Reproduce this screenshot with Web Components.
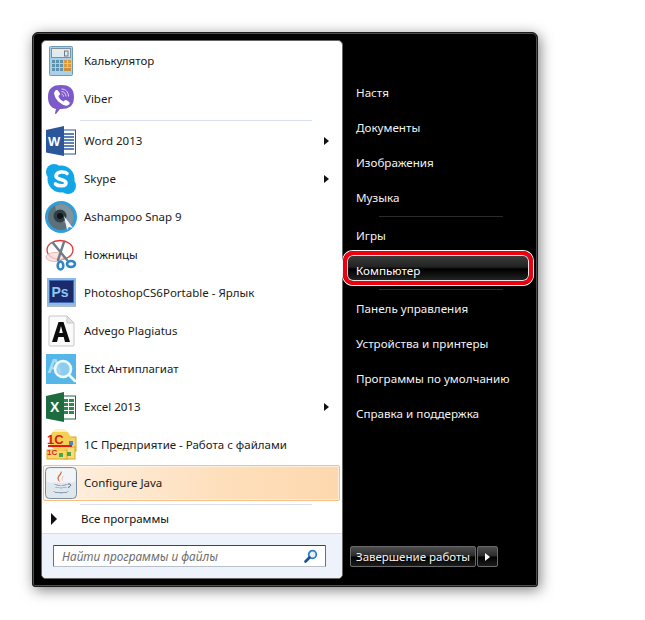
<!DOCTYPE html>
<html lang="ru"><head><meta charset="utf-8"><title>Пуск</title>
<style>html,body{margin:0;background:#fff;height:620px;overflow:hidden}body{padding:32px 0 0 32px;box-sizing:border-box;font:12px/16px "Noto Sans","Liberation Sans",sans-serif}</style>
</head><body>
<start-menu>
  <left-panel slot="left">
    <app-row icon="calc">Калькулятор</app-row>
    <app-row icon="viber">Viber</app-row>
    <panel-sep></panel-sep>
    <app-row icon="word" more>Word 2013</app-row>
    <app-row icon="skype" more>Skype</app-row>
    <app-row icon="snap">Ashampoo Snap 9</app-row>
    <app-row icon="scissors">Ножницы</app-row>
    <app-row icon="ps">PhotoshopCS6Portable - Ярлык</app-row>
    <app-row icon="advego">Advego Plagiatus</app-row>
    <app-row icon="etxt">Etxt Антиплагиат</app-row>
    <app-row icon="excel" more>Excel 2013</app-row>
    <app-row icon="onec">1С Предприятие - Работа с файлами</app-row>
    <app-row icon="java" active>Configure Java</app-row>
    <panel-sep></panel-sep>
    <all-programs>Все программы</all-programs>
    <search-box slot="search" placeholder="Найти программы и файлы"></search-box>
  </left-panel>
  <right-panel slot="right">
    <place-link>Настя</place-link>
    <place-link>Документы</place-link>
    <place-link>Изображения</place-link>
    <place-link>Музыка</place-link>
    <place-sep></place-sep>
    <place-link>Игры</place-link>
    <place-link marked>Компьютер</place-link>
    <place-sep></place-sep>
    <place-link>Панель управления</place-link>
    <place-link>Устройства и принтеры</place-link>
    <place-link>Программы по умолчанию</place-link>
    <place-link>Справка и поддержка</place-link>
    <shut-down slot="foot">Завершение работы</shut-down>
  </right-panel>
</start-menu>
<script>
const ICONS={
calc:`<svg viewBox="0 0 32 32" width="32" height="32"><rect x="4.500" y="1.500" width="23" height="29" rx="1" fill="#a9d0e6" stroke="#6d9cb8"/><rect x="6.500" y="3.500" width="19" height="9" fill="#dfeaf4" stroke="#7a8fa8"/><rect x="7" y="4" width="18" height="3" fill="#f4ecc8" opacity=".8"/><rect x="19.500" y="6" width="3.500" height="5" fill="none" stroke="#6c7a88"/><g fill="#5f92ac"><rect x="7" y="15" width="3" height="3"/><rect x="11" y="15" width="3" height="3"/><rect x="15" y="15" width="3" height="3"/><rect x="7" y="19" width="3" height="3"/><rect x="11" y="19" width="3" height="3"/><rect x="15" y="19" width="3" height="3"/><rect x="7" y="23" width="3" height="3"/><rect x="11" y="23" width="3" height="3"/><rect x="15" y="23" width="3" height="3"/></g><g fill="#d99a3d"><rect x="19" y="15" width="3" height="3"/><rect x="23" y="15" width="3" height="3"/><rect x="19" y="19" width="3" height="3"/><rect x="23" y="19" width="3" height="3"/></g><rect x="19" y="23" width="7" height="3" fill="#c98f3c"/></svg>`,
viber:`<svg viewBox="0 0 32 32" width="32" height="32"><path d="M11 26C6 25 3 21 3 14 3 5 8 2 16 2s13 3 13 12-5 12-13 12h-1l-4 5c-.5 0-1-.5-1-1z" fill="#7d59c9"/><path d="M10.500 7.500c1-.8 2.200-.6 2.800.4l1.400 2.200c.5.8.3 1.600-.4 2.200l-1 .8c.8 2.500 2.800 4.500 5.300 5.400l.9-1c.6-.7 1.500-.8 2.200-.3l2.200 1.500c1 .7 1 2 .2 2.800-1 1-2.300 1.500-3.900 1-6-2-10-6.500-11-11.500-.3-1.400.5-2.500 1.300-3.500z" fill="#fff"/><g fill="none" stroke="#e4dcf5" stroke-width="1"><path d="M16.500 6c4 0 7 3 7 7.500"/><path d="M16.500 8.500c2.500 0 4.500 2 4.500 5"/><path d="M16.500 11c1 0 2 1 2 2.500"/></g></svg>`,
word:`<svg viewBox="0 0 32 32" width="32" height="32"><rect x="15" y="5" width="15.500" height="24" fill="#fff" stroke="#2b579a"/><g stroke="#2b579a" stroke-width="1.400"><path d="M17 9h12M17 12h12M17 15h12M17 18h12M17 21h12M17 24h12"/></g><path d="M1 5 19 1v30L1 27.500z" fill="#2b579a"/><text x="3" y="21" font-family="Liberation Sans" font-weight="700" font-size="13" fill="#fff">W</text></svg>`,
skype:`<svg viewBox="0 0 32 32" width="32" height="32"><circle cx="9" cy="9" r="8" fill="#12a5e8"/><circle cx="23" cy="23" r="8" fill="#12a5e8"/><circle cx="16" cy="16" r="13.500" fill="#12a5e8"/><path d="M22 10.500C20 8.500 12 8 11 12.500c-.8 5 10 3 10 7.500 0 3.500-7.500 3.500-10.500 1" fill="none" stroke="#fff" stroke-width="3.600" stroke-linecap="round"/></svg>`,
snap:`<svg viewBox="0 0 32 32" width="32" height="32"><circle cx="16" cy="16" r="16" fill="#2f9edb"/><circle cx="16" cy="16" r="13" fill="#5c7079"/><path d="M16 3a13 13 0 0 1 10 21c-7-1-14-6-16-19 2-1 4-2 6-2z" fill="#7f939c"/><circle cx="15" cy="15" r="6.500" fill="#2f3d45"/><circle cx="15" cy="15" r="3" fill="#0e1519"/><path d="M19 15l9 12-4-1-2 3z" fill="#eef2f5"/></svg>`,
scissors:`<svg viewBox="0 0 32 32" width="32" height="32"><ellipse cx="15" cy="11" rx="13" ry="9.500" fill="#fff" stroke="#de3a3a" stroke-width="1.400"/><ellipse cx="10" cy="18" rx="9" ry="4.500" fill="#f7dcdc" stroke="#e8a8a8" opacity=".8"/><path d="M8 4l14 17M19 3 13 21" stroke="#707c88" stroke-width="2.400" stroke-linecap="round"/><g fill="none" stroke="#2f86c1" stroke-width="2.600"><ellipse cx="15.500" cy="26.500" rx="2.800" ry="4"/><ellipse cx="26" cy="25" rx="4" ry="3"/></g></svg>`,
ps:`<svg viewBox="0 0 32 32" width="32" height="32"><rect x="2" y="1" width="29" height="27" fill="#8db9e6"/><rect x="2" y="28" width="29" height="2" fill="#b0b8c0"/><rect x="4.500" y="3.500" width="24" height="22" fill="#1b2a6b" stroke="#3f68b5"/><text x="6.500" y="20" font-family="Liberation Sans" font-weight="700" font-size="14" fill="#8fc6f5">Ps</text></svg>`,
advego:`<svg viewBox="0 0 32 32" width="32" height="32"><path d="M5 1h17l7 7v22a1 1 0 0 1-1 1H5a1 1 0 0 1-1-1V2a1 1 0 0 1 1-1z" fill="#fafafa" stroke="#c7c7c7"/><path d="M22 1v7h7z" fill="#e3e3e3" stroke="#c7c7c7"/><path d="M7 27 13.500 7h5L25 27h-5l-1.300-5h-5.400L12 27zM14.200 18h3.600L16 11z" fill="#0c0c0c"/></svg>`,
etxt:`<svg viewBox="0 0 32 32" width="32" height="32"><rect x="1" y="1" width="30" height="30" fill="#55b6ea"/><text x="2" y="20" font-family="Liberation Sans" font-weight="700" font-size="21" fill="#a8dcf6">A</text><circle cx="18" cy="16" r="8" fill="#9fd6f2" fill-opacity=".75" stroke="#f4fbfe" stroke-width="2.600"/><path d="M24 22l6 6" stroke="#f4fbfe" stroke-width="2.600" stroke-linecap="round"/></svg>`,
excel:`<svg viewBox="0 0 32 32" width="32" height="32"><rect x="15" y="5" width="15.500" height="23" fill="#fff" stroke="#1d6b3f"/><g fill="#2a8a52"><rect x="19" y="8" width="4" height="3"/><rect x="24" y="8" width="5" height="3"/><rect x="19" y="12" width="4" height="3"/><rect x="24" y="12" width="5" height="3"/><rect x="19" y="16" width="4" height="3"/><rect x="24" y="16" width="5" height="3"/><rect x="19" y="20" width="4" height="3"/><rect x="24" y="20" width="5" height="3"/></g><path d="M1 5 19 1v30L1 27.500z" fill="#1d6b3f"/><text x="5" y="21" font-family="Liberation Sans" font-weight="700" font-size="14" fill="#fff">X</text></svg>`,
onec:`<svg viewBox="0 0 32 32" width="32" height="32"><rect x="22" y="8" width="9" height="14" fill="#f6d365" stroke="#d9a520"/><rect x="19" y="18" width="11" height="12" fill="#f8dc78" stroke="#d9a520"/><rect x="2" y="21" width="20" height="9" fill="#f6d96e" stroke="#d9a520"/><circle cx="15" cy="11" r="11" fill="#f6cf55"/><path d="M7 3a11 11 0 0 1 16 0z" fill="#fdf0b8"/><text x="2" y="15" font-family="Liberation Sans" font-weight="700" font-size="13" fill="#e01a16">1С</text><path d="M3 17h24" stroke="#e01a16" stroke-width="2"/><text x="2" y="26" font-family="Liberation Sans" font-weight="700" font-size="8" fill="#e01a16">1С</text><rect x="14" y="24" width="4" height="4" fill="#4da24a"/><rect x="24" y="12" width="4" height="4" fill="#4a87c9"/><rect x="22" y="23" width="4" height="4" fill="#4da24a"/></svg>`,
java:`<svg viewBox="0 0 32 32" width="32" height="32"><rect x=".5" y=".5" width="31" height="31" rx="4" fill="#dfe7ee" stroke="#7c8d9c"/><rect x="1.500" y="1.500" width="29" height="14" rx="3" fill="#fff" opacity=".6"/><path d="M16 4c3 3-4 5-2 9 .5 1 1 1.500 1.500 2-3-1-4-4-2-6.500C14.500 7 16 6 16 4zM20 8c-2 1.500-4 3-2 6.500C16 12 16.500 10 20 8z" fill="#d8602a"/><path d="M9 17c3 1.500 11 1.500 14 0-1 2-13 2-14 0zM10 20c3 1 9 1 12 0-1 1.500-11 1.500-12 0zM8 24c4 2 12 2 16 0-2 3-14 3-16 0z" fill="#41647e"/><path d="M23 17c3-.5 4 2 0 3.500" fill="none" stroke="#41647e"/></svg>`
};
const tpl=(el,html)=>{el.attachShadow({mode:'open'}).innerHTML=html};
customElements.define('start-menu',class extends HTMLElement{constructor(){super();tpl(this,`<style>
:host{display:flex;box-sizing:border-box;width:506px;height:555px;background:#000;border:1px solid #1c1c1c;border-radius:6px 6px 3px 3px;box-shadow:inset 0 0 0 1px #4d4d4d,2px 3px 14px rgba(0,0,0,.5);padding:7px 8px 8px}
</style><slot name="left"></slot><slot name="right"></slot>`)}});
customElements.define('left-panel',class extends HTMLElement{constructor(){super();tpl(this,`<style>
:host{display:flex;flex-direction:column;box-sizing:border-box;width:302px;height:539px;background:#fff;border:1px solid #666;border-radius:5px;overflow:hidden;flex:none}
.list{flex:1;padding:1px 1px 0;display:flex;flex-direction:column}
.foot{flex:none;height:45px;background:#edf2fb;border-top:1px solid #d3dfee;box-sizing:border-box;padding:11px 16px 0 11px}
</style><div class="list"><slot></slot></div><div class="foot"><slot name="search"></slot></div>`)}});
customElements.define('app-row',class extends HTMLElement{constructor(){super();
const i=ICONS[this.getAttribute('icon')]||'';
tpl(this,`<style>
:host{display:flex;align-items:center;box-sizing:border-box;height:38px;padding-left:2px;color:#1a1a1a;flex:none;position:relative;font-size:11.5px}
:host([active]){margin:1px 1px 1px 0;height:36px;padding-left:1px;border:1px solid #f7bd84;border-radius:2px;background:linear-gradient(90deg,#fef1e3,#fedfbc 60%,#fdd8ae);box-shadow:inset 0 0 0 1px rgba(255,255,255,.55)}
.ic{width:32px;height:32px;flex:none;display:block}
.t{margin-left:7px;flex:1;white-space:nowrap}
.a{width:0;height:0;border-left:5px solid #111;border-top:4px solid transparent;border-bottom:4px solid transparent;margin-right:12px;display:none}
:host([more]) .a{display:block}
</style><span class="ic">${i}</span><span class="t"><slot></slot></span><span class="a"></span>`)}});
customElements.define('panel-sep',class extends HTMLElement{constructor(){super();tpl(this,`<style>
:host{display:flex;align-items:center;height:4px;flex:none;padding:0 29px 0 37px}
i{display:block;height:1px;flex:1;background:#d5dff0}</style><i></i>`)}});
customElements.define('all-programs',class extends HTMLElement{constructor(){super();tpl(this,`<style>
:host{display:flex;align-items:center;height:27px;padding-left:8px;color:#111;margin-top:-1px;flex:none;font-size:11.5px}
i{width:0;height:0;border-left:6px solid #111;border-top:6px solid transparent;border-bottom:6px solid transparent;margin-right:24px}
</style><i></i><slot></slot>`)}});
customElements.define('search-box',class extends HTMLElement{constructor(){super();tpl(this,`<style>
:host{display:flex;align-items:center;box-sizing:border-box;height:22px;background:#fff;border:1px solid #6a7078;border-radius:1px;padding:0 7px 0 8px;border-top-color:#444;border-bottom-color:#b8c0cc}
span{flex:1;font-style:italic;color:#6d6d6d;white-space:nowrap;font-size:11.8px}
svg{flex:none}
</style><span>${this.getAttribute('placeholder')}</span><svg width="14" height="14" viewBox="0 0 14 14"><circle cx="8.500" cy="5.500" r="3.800" fill="#e4f1fb" stroke="#2f7fc9" stroke-width="1.800"/><path d="M5.500 8.500 1.500 12.500" stroke="#1c4f8f" stroke-width="2.600" stroke-linecap="round"/></svg>`)}});
customElements.define('right-panel',class extends HTMLElement{constructor(){super();tpl(this,`<style>
:host{display:flex;flex-direction:column;flex:1;min-width:0;padding:35px 0 0 0;color:#fff}
.list{flex:1;display:flex;flex-direction:column}
.foot{flex:none;height:32px;padding-left:7px}
</style><div class="list"><slot></slot></div><div class="foot"><slot name="foot"></slot></div>`)}});
customElements.define('place-link',class extends HTMLElement{constructor(){super();tpl(this,`<style>
:host{display:flex;align-items:center;box-sizing:border-box;height:35px;padding-left:13px;color:#f2f2f2;flex:none;position:relative;font-size:11.65px}
:host([marked]){color:#fff}
:host([marked])::before{content:"";position:absolute;left:0;right:-4px;top:-2px;height:34px;box-sizing:border-box;border:4px solid #ee0010;border-radius:10px;box-shadow:0 0 0 1px #f4f4f4,inset 0 0 0 1px #e4e4e4;background:linear-gradient(#3c3c3c,#232323 45%,#000 55%,#262626)}
span{position:relative}
</style><span><slot></slot></span>`)}});
customElements.define('place-sep',class extends HTMLElement{constructor(){super();tpl(this,`<style>
:host{display:flex;align-items:center;height:3px;flex:none;padding:0 26px 0 36px}
i{display:block;height:1px;flex:1;background:#2b2b2b}</style><i></i>`)}});
customElements.define('shut-down',class extends HTMLElement{constructor(){super();tpl(this,`<style>
:host{display:flex;gap:1px;height:21px;color:#f5f5f5;font-size:11.5px}
div{box-sizing:border-box;height:21px;border:1px solid #6a6a6a;border-radius:2px;background:linear-gradient(#4d4d4d,#2a2a2a 48%,#000 52%,#1c1c1c)}
.m{width:126px;padding-left:5px;line-height:19px;white-space:nowrap}
.a{width:21px;display:flex;align-items:center;justify-content:center}
i{width:0;height:0;border-left:5px solid #fff;border-top:4px solid transparent;border-bottom:4px solid transparent}
</style><div class="m"><slot></slot></div><div class="a"><i></i></div>`)}});
</script>
</body></html>
